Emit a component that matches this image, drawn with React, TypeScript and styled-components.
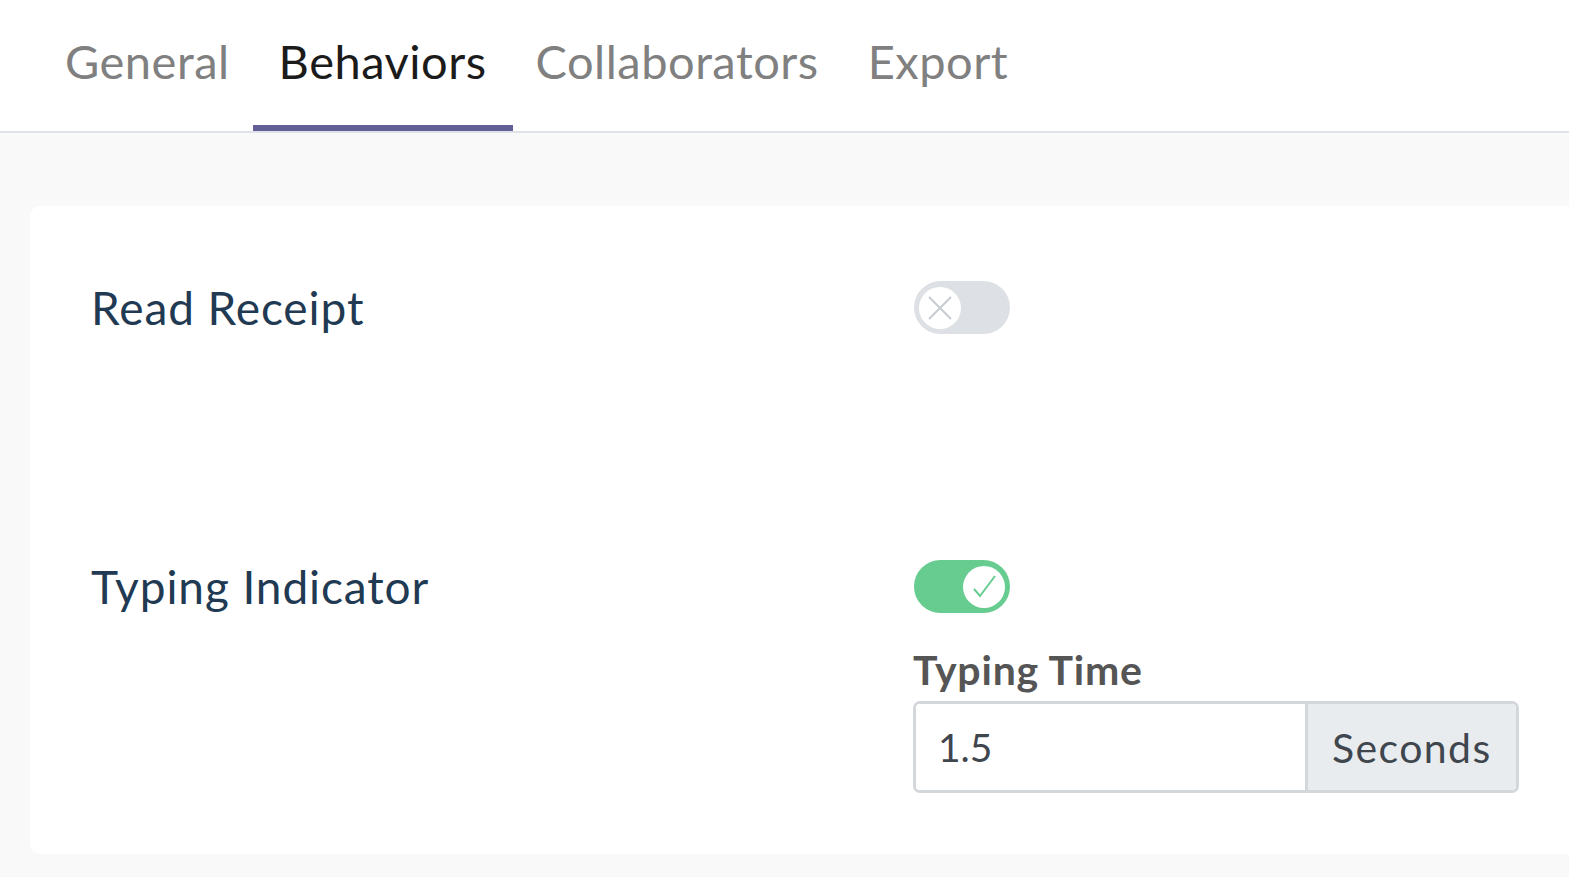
import * as React from "react";
import styled, { createGlobalStyle } from "styled-components";

const GlobalStyle = createGlobalStyle`
  html, body {
    margin: 0;
    padding: 0;
    background: #f9f9f9;
    font-family: Lato, "Open Sans", Arial, sans-serif;
  }
  * {
    box-sizing: border-box;
  }
`;

const Page = styled.div`
  min-height: 877px;
  background: #f9f9f9;
  overflow: hidden;
`;

const TabBar = styled.nav`
  display: flex;
  height: 133px;
  padding-left: 39px;
  background: #ffffff;
  border-bottom: 2px solid #dfe3e8;
`;

const Tab = styled.div<{ $active?: boolean }>`
  display: flex;
  align-items: flex-start;
  padding: 30px 26px 0;
  height: 131px;
  font-size: 47px;
  line-height: 62px;
  letter-spacing: 0.5px;
  color: ${(p) => (p.$active ? "#1b1b1b" : "#808080")};
  border-bottom: 6px solid ${(p) => (p.$active ? "#625f96" : "transparent")};
  cursor: pointer;

  & + & {
    margin-left: -3px;
  }
`;

const Content = styled.main`
  padding: 73px 0 24px 30px;
`;

const Card = styled.section`
  margin-right: -20px;
  background: #ffffff;
  border-radius: 10px;
  padding: 75px 61px 61px;
`;

const Row = styled.div<{ $gap?: number }>`
  display: grid;
  grid-template-columns: 822px 606px;
  margin-bottom: ${(p) => p.$gap ?? 0}px;
`;

const Label = styled.div`
  font-size: 46px;
  line-height: 53px;
  letter-spacing: 0.9px;
  color: #1f3a52;
`;

const Controls = styled.div`
  display: flex;
  flex-direction: column;
  align-items: flex-start;
`;

const Track = styled.button<{ $on?: boolean }>`
  position: relative;
  width: 96px;
  height: 53px;
  padding: 0;
  margin-left: 1px;
  border: none;
  border-radius: 27px;
  background: ${(p) => (p.$on ? "#66cc8f" : "#dde1e6")};
  cursor: pointer;
`;

const Knob = styled.span<{ $on?: boolean }>`
  position: absolute;
  top: 5.5px;
  left: ${(p) => (p.$on ? "49px" : "5px")};
  width: 42px;
  height: 42px;
  border-radius: 50%;
  background: #ffffff;
  display: flex;
  align-items: center;
  justify-content: center;
`;

const FieldLabel = styled.div`
  margin-top: 33px;
  font-size: 41px;
  line-height: 48px;
  letter-spacing: 0.8px;
  font-weight: 700;
  color: #555555;
`;

const InputGroup = styled.div`
  display: flex;
  width: 606px;
  height: 92px;
  margin-top: 7px;
  border: 3px solid #d3d7dc;
  border-radius: 7px;
  overflow: hidden;
`;

const NumberInput = styled.input`
  flex: 1;
  min-width: 0;
  border: none;
  outline: none;
  padding: 0 0 0 22px;
  font-family: inherit;
  font-size: 39px;
  color: #3f464e;
  background: #ffffff;
`;

const Addon = styled.div`
  display: flex;
  align-items: center;
  padding: 0 0 0 24px;
  width: 211px;
  border-left: 3px solid #d3d7dc;
  background: #e9ecef;
  font-size: 41px;
  letter-spacing: 1.4px;
  color: #3f464e;
`;

const Toggle = ({ on }: { on?: boolean }) => (
  <Track $on={on} aria-pressed={on}>
    <Knob $on={on}>
      {on ? (
        <svg width="30" height="30" viewBox="0 0 30 30">
          <path d="M5 17 L11 24 L26 4" fill="none" stroke="#66cc8f" strokeWidth="2" />
        </svg>
      ) : (
        <svg width="26" height="26" viewBox="0 0 26 26">
          <path d="M2 2 L24 24 M24 2 L2 24" fill="none" stroke="#c7ccd2" strokeWidth="2" />
        </svg>
      )}
    </Knob>
  </Track>
);

const tabs = ["General", "Behaviors", "Collaborators", "Export"];

export default function App() {
  const [time, setTime] = React.useState("1.5");

  return (
    <Page>
      <GlobalStyle />
      <TabBar>
        {tabs.map((t) => (
          <Tab key={t} $active={t === "Behaviors"}>
            {t}
          </Tab>
        ))}
      </TabBar>
      <Content>
        <Card>
          <Row $gap={226}>
            <Label>Read Receipt</Label>
            <Controls>
              <Toggle />
            </Controls>
          </Row>
          <Row>
            <Label>Typing Indicator</Label>
            <Controls>
              <Toggle on />
              <FieldLabel>Typing Time</FieldLabel>
              <InputGroup>
                <NumberInput value={time} onChange={(e) => setTime(e.target.value)} />
                <Addon>Seconds</Addon>
              </InputGroup>
            </Controls>
          </Row>
        </Card>
      </Content>
    </Page>
  );
}
